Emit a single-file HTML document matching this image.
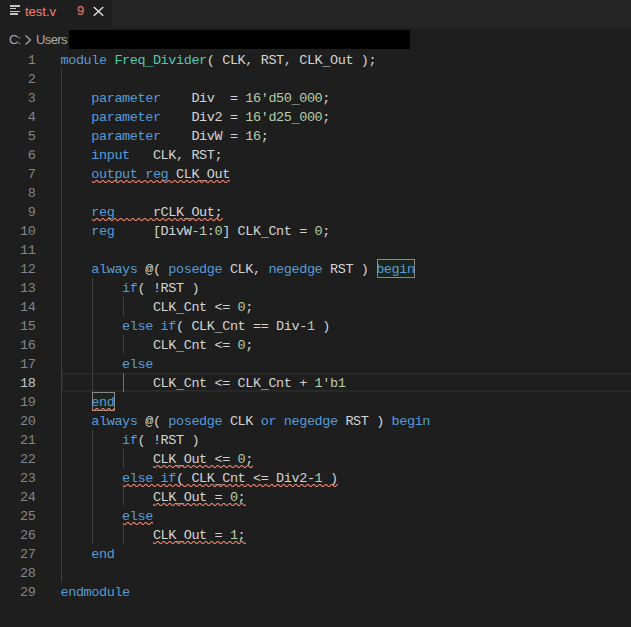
<!DOCTYPE html>
<html><head><meta charset="utf-8">
<style>
html,body{margin:0;padding:0;width:631px;height:627px;overflow:hidden;background:#1e1e1e;}
body{position:relative;}
#tabs{position:absolute;left:0;top:0;width:631px;height:28px;background:#252526;}
#tab{position:absolute;left:0;top:0;width:112px;height:28px;background:#1e1e1e;}
.ic{position:absolute;left:10px;background:#c5c5c5;}
#tname{position:absolute;left:25px;top:3px;font:13px/18px "Liberation Sans",sans-serif;color:#f88070;}
#tcnt{position:absolute;left:77px;top:1.5px;font:13px/18px "Liberation Sans",sans-serif;color:#c66a62;-webkit-text-stroke:0.35px #c66a62;}
#crumbs{position:absolute;left:0;top:28px;width:631px;height:22px;}
.cr{position:absolute;top:3px;font:13px/18px "Liberation Sans",sans-serif;color:#a9a9a9;white-space:pre;}
#redact{position:absolute;left:69px;top:30px;width:341px;height:19px;background:#000;}
.ln{position:absolute;left:60.5px;height:19px;margin-top:1px;font:13.5px/19px "Liberation Mono",monospace;letter-spacing:-0.403px;color:#d4d4d4;white-space:pre;}
.ln b{font-weight:normal;} .ln i{font-style:normal;position:relative;top:1px;}
.k{color:#569cd6;} .n{color:#b5cea8;} .t{color:#4ec9b0;}
.num{position:absolute;left:0;width:35.4px;text-align:right;height:19px;margin-top:1px;font:13.5px/19px "Liberation Mono",monospace;letter-spacing:-0.403px;color:#858585;}
.num.act{color:#c6c6c6;}
.g{position:absolute;width:1px;background:#404040;}
.g.ga{background:#707070;}
#cur{position:absolute;left:61px;top:373px;width:570px;height:19px;box-sizing:border-box;border-top:2px solid #282828;border-bottom:2px solid #282828;border-left:2px solid #282828;}
.bm{position:absolute;height:19px;box-sizing:border-box;border:1px solid #888888;background:#1b251b;}
#sqsvg{position:absolute;left:0;top:0;}
</style></head><body>
<div id="tabs"><div id="tab">
<div class="ic" style="top:5px;width:10px;height:2px"></div>
<div class="ic" style="top:8px;width:6px;height:1.4px"></div>
<div class="ic" style="top:10.5px;width:10px;height:1.7px"></div>
<div class="ic" style="top:13px;width:8px;height:2px"></div>
<div id="tname">test.v</div>
<div id="tcnt">9</div>
<svg style="position:absolute;left:93px;top:6px" width="11" height="11" viewBox="0 0 11 11"><path d="M0.8 0.9 L10.2 9.7 M10.2 0.9 L0.8 9.7" stroke="#e4e4e4" stroke-width="1.35" fill="none"/></svg>
</div></div>
<div id="crumbs">
<div class="cr" style="left:9px;letter-spacing:-1px">C:</div>
<svg style="position:absolute;left:24px;top:7px" width="8" height="10" viewBox="0 0 8 10"><path d="M1.5 0.5 L6.5 5 L1.5 9.5" stroke="#a9a9a9" stroke-width="1.2" fill="none"/></svg>
<div class="cr" style="left:36px;letter-spacing:-0.6px">Users</div>
</div>
<div id="redact"></div>
<div id="cur"></div>
<div class="g" style="left:61px;top:69px;height:513px"></div>
<div class="g" style="left:92px;top:278px;height:114px"></div>
<div class="g" style="left:92px;top:430px;height:114px"></div>
<div class="g" style="left:123px;top:297px;height:19px"></div>
<div class="g" style="left:123px;top:335px;height:19px"></div>
<div class="g" style="left:123px;top:449px;height:19px"></div>
<div class="g" style="left:123px;top:487px;height:19px"></div>
<div class="g" style="left:123px;top:525px;height:19px"></div>
<div class="g ga" style="left:123px;top:373px;height:19px"></div>
<div class="bm" style="left:377px;top:259px;width:38px"></div>
<div class="bm" style="left:92px;top:392px;width:23px"></div>
<div class="num" style="top:50px">1</div>
<div class="num" style="top:69px">2</div>
<div class="num" style="top:88px">3</div>
<div class="num" style="top:107px">4</div>
<div class="num" style="top:126px">5</div>
<div class="num" style="top:145px">6</div>
<div class="num" style="top:164px">7</div>
<div class="num" style="top:183px">8</div>
<div class="num" style="top:202px">9</div>
<div class="num" style="top:221px">10</div>
<div class="num" style="top:240px">11</div>
<div class="num" style="top:259px">12</div>
<div class="num" style="top:278px">13</div>
<div class="num" style="top:297px">14</div>
<div class="num" style="top:316px">15</div>
<div class="num" style="top:335px">16</div>
<div class="num" style="top:354px">17</div>
<div class="num act" style="top:373px">18</div>
<div class="num" style="top:392px">19</div>
<div class="num" style="top:411px">20</div>
<div class="num" style="top:430px">21</div>
<div class="num" style="top:449px">22</div>
<div class="num" style="top:468px">23</div>
<div class="num" style="top:487px">24</div>
<div class="num" style="top:506px">25</div>
<div class="num" style="top:525px">26</div>
<div class="num" style="top:544px">27</div>
<div class="num" style="top:563px">28</div>
<div class="num" style="top:582px">29</div>
<div class="ln" style="top:50px"><b class="k">module</b> <b class="t">Freq<i>_</i>Divider</b>( CLK, RST, CLK<i>_</i>Out );</div>
<div class="ln" style="top:69px"></div>
<div class="ln" style="top:88px">    <b class="k">parameter</b>    Div  = <b class="n">16&#x27;d50<i>_</i>000</b>;</div>
<div class="ln" style="top:107px">    <b class="k">parameter</b>    Div2 = <b class="n">16&#x27;d25<i>_</i>000</b>;</div>
<div class="ln" style="top:126px">    <b class="k">parameter</b>    DivW = <b class="n">16</b>;</div>
<div class="ln" style="top:145px">    <b class="k">input</b>   CLK, RST;</div>
<div class="ln" style="top:164px">    <b class="k">output</b> <b class="k">reg</b> CLK<i>_</i>Out</div>
<div class="ln" style="top:183px"></div>
<div class="ln" style="top:202px">    <b class="k">reg</b>     rCLK<i>_</i>Out;</div>
<div class="ln" style="top:221px">    <b class="k">reg</b>     [DivW-<b class="n">1</b>:<b class="n">0</b>] CLK<i>_</i>Cnt = <b class="n">0</b>;</div>
<div class="ln" style="top:240px"></div>
<div class="ln" style="top:259px">    <b class="k">always</b> @( <b class="k">posedge</b> CLK, <b class="k">negedge</b> RST ) <b class="k">begin</b></div>
<div class="ln" style="top:278px">        <b class="k">if</b>( !RST )</div>
<div class="ln" style="top:297px">            CLK<i>_</i>Cnt &lt;= <b class="n">0</b>;</div>
<div class="ln" style="top:316px">        <b class="k">else</b> <b class="k">if</b>( CLK<i>_</i>Cnt == Div-<b class="n">1</b> )</div>
<div class="ln" style="top:335px">            CLK<i>_</i>Cnt &lt;= <b class="n">0</b>;</div>
<div class="ln" style="top:354px">        <b class="k">else</b></div>
<div class="ln" style="top:373px">            CLK<i>_</i>Cnt &lt;= CLK<i>_</i>Cnt + <b class="n">1&#x27;b1</b></div>
<div class="ln" style="top:392px">    <b class="k">end</b></div>
<div class="ln" style="top:411px">    <b class="k">always</b> @( <b class="k">posedge</b> CLK <b class="k">or</b> <b class="k">negedge</b> RST ) <b class="k">begin</b></div>
<div class="ln" style="top:430px">        <b class="k">if</b>( !RST )</div>
<div class="ln" style="top:449px">            CLK<i>_</i>Out &lt;= <b class="n">0</b>;</div>
<div class="ln" style="top:468px">        <b class="k">else</b> <b class="k">if</b>( CLK<i>_</i>Cnt &lt;= Div2-<b class="n">1</b> )</div>
<div class="ln" style="top:487px">            CLK<i>_</i>Out = <b class="n">0</b>;</div>
<div class="ln" style="top:506px">        <b class="k">else</b></div>
<div class="ln" style="top:525px">            CLK<i>_</i>Out = <b class="n">1</b>;</div>
<div class="ln" style="top:544px">    <b class="k">end</b></div>
<div class="ln" style="top:563px"></div>
<div class="ln" style="top:582px"><b class="k">endmodule</b></div>
<svg id="sqsvg" width="631" height="627">

<pattern id="sq0" patternUnits="userSpaceOnUse" width="6" height="3" x="92" y="180"><g fill="#f48771"><polygon points="5.5,0 2.5,3 1.1,3 4.1,0"/><polygon points="4,0 6,2 6,0.6 5.4,0"/><polygon points="0,2 1,3 2.4,3 0,0.6"/></g></pattern><rect x="92" y="180" width="138" height="3" fill="url(#sq0)"/>
<pattern id="sq1" patternUnits="userSpaceOnUse" width="6" height="3" x="92" y="218"><g fill="#f48771"><polygon points="5.5,0 2.5,3 1.1,3 4.1,0"/><polygon points="4,0 6,2 6,0.6 5.4,0"/><polygon points="0,2 1,3 2.4,3 0,0.6"/></g></pattern><rect x="92" y="218" width="131" height="3" fill="url(#sq1)"/>
<pattern id="sq2" patternUnits="userSpaceOnUse" width="6" height="3" x="92" y="408"><g fill="#f48771"><polygon points="5.5,0 2.5,3 1.1,3 4.1,0"/><polygon points="4,0 6,2 6,0.6 5.4,0"/><polygon points="0,2 1,3 2.4,3 0,0.6"/></g></pattern><rect x="92" y="408" width="23" height="3" fill="url(#sq2)"/>
<pattern id="sq3" patternUnits="userSpaceOnUse" width="6" height="3" x="153" y="465"><g fill="#f48771"><polygon points="5.5,0 2.5,3 1.1,3 4.1,0"/><polygon points="4,0 6,2 6,0.6 5.4,0"/><polygon points="0,2 1,3 2.4,3 0,0.6"/></g></pattern><rect x="153" y="465" width="100" height="3" fill="url(#sq3)"/>
<pattern id="sq4" patternUnits="userSpaceOnUse" width="6" height="3" x="123" y="484"><g fill="#f48771"><polygon points="5.5,0 2.5,3 1.1,3 4.1,0"/><polygon points="4,0 6,2 6,0.6 5.4,0"/><polygon points="0,2 1,3 2.4,3 0,0.6"/></g></pattern><rect x="123" y="484" width="215" height="3" fill="url(#sq4)"/>
<pattern id="sq5" patternUnits="userSpaceOnUse" width="6" height="3" x="153" y="503"><g fill="#f48771"><polygon points="5.5,0 2.5,3 1.1,3 4.1,0"/><polygon points="4,0 6,2 6,0.6 5.4,0"/><polygon points="0,2 1,3 2.4,3 0,0.6"/></g></pattern><rect x="153" y="503" width="93" height="3" fill="url(#sq5)"/>
<pattern id="sq6" patternUnits="userSpaceOnUse" width="6" height="3" x="123" y="522"><g fill="#f48771"><polygon points="5.5,0 2.5,3 1.1,3 4.1,0"/><polygon points="4,0 6,2 6,0.6 5.4,0"/><polygon points="0,2 1,3 2.4,3 0,0.6"/></g></pattern><rect x="123" y="522" width="30" height="3" fill="url(#sq6)"/>
<pattern id="sq7" patternUnits="userSpaceOnUse" width="6" height="3" x="153" y="541"><g fill="#f48771"><polygon points="5.5,0 2.5,3 1.1,3 4.1,0"/><polygon points="4,0 6,2 6,0.6 5.4,0"/><polygon points="0,2 1,3 2.4,3 0,0.6"/></g></pattern><rect x="153" y="541" width="93" height="3" fill="url(#sq7)"/>
</svg>
</body></html>
